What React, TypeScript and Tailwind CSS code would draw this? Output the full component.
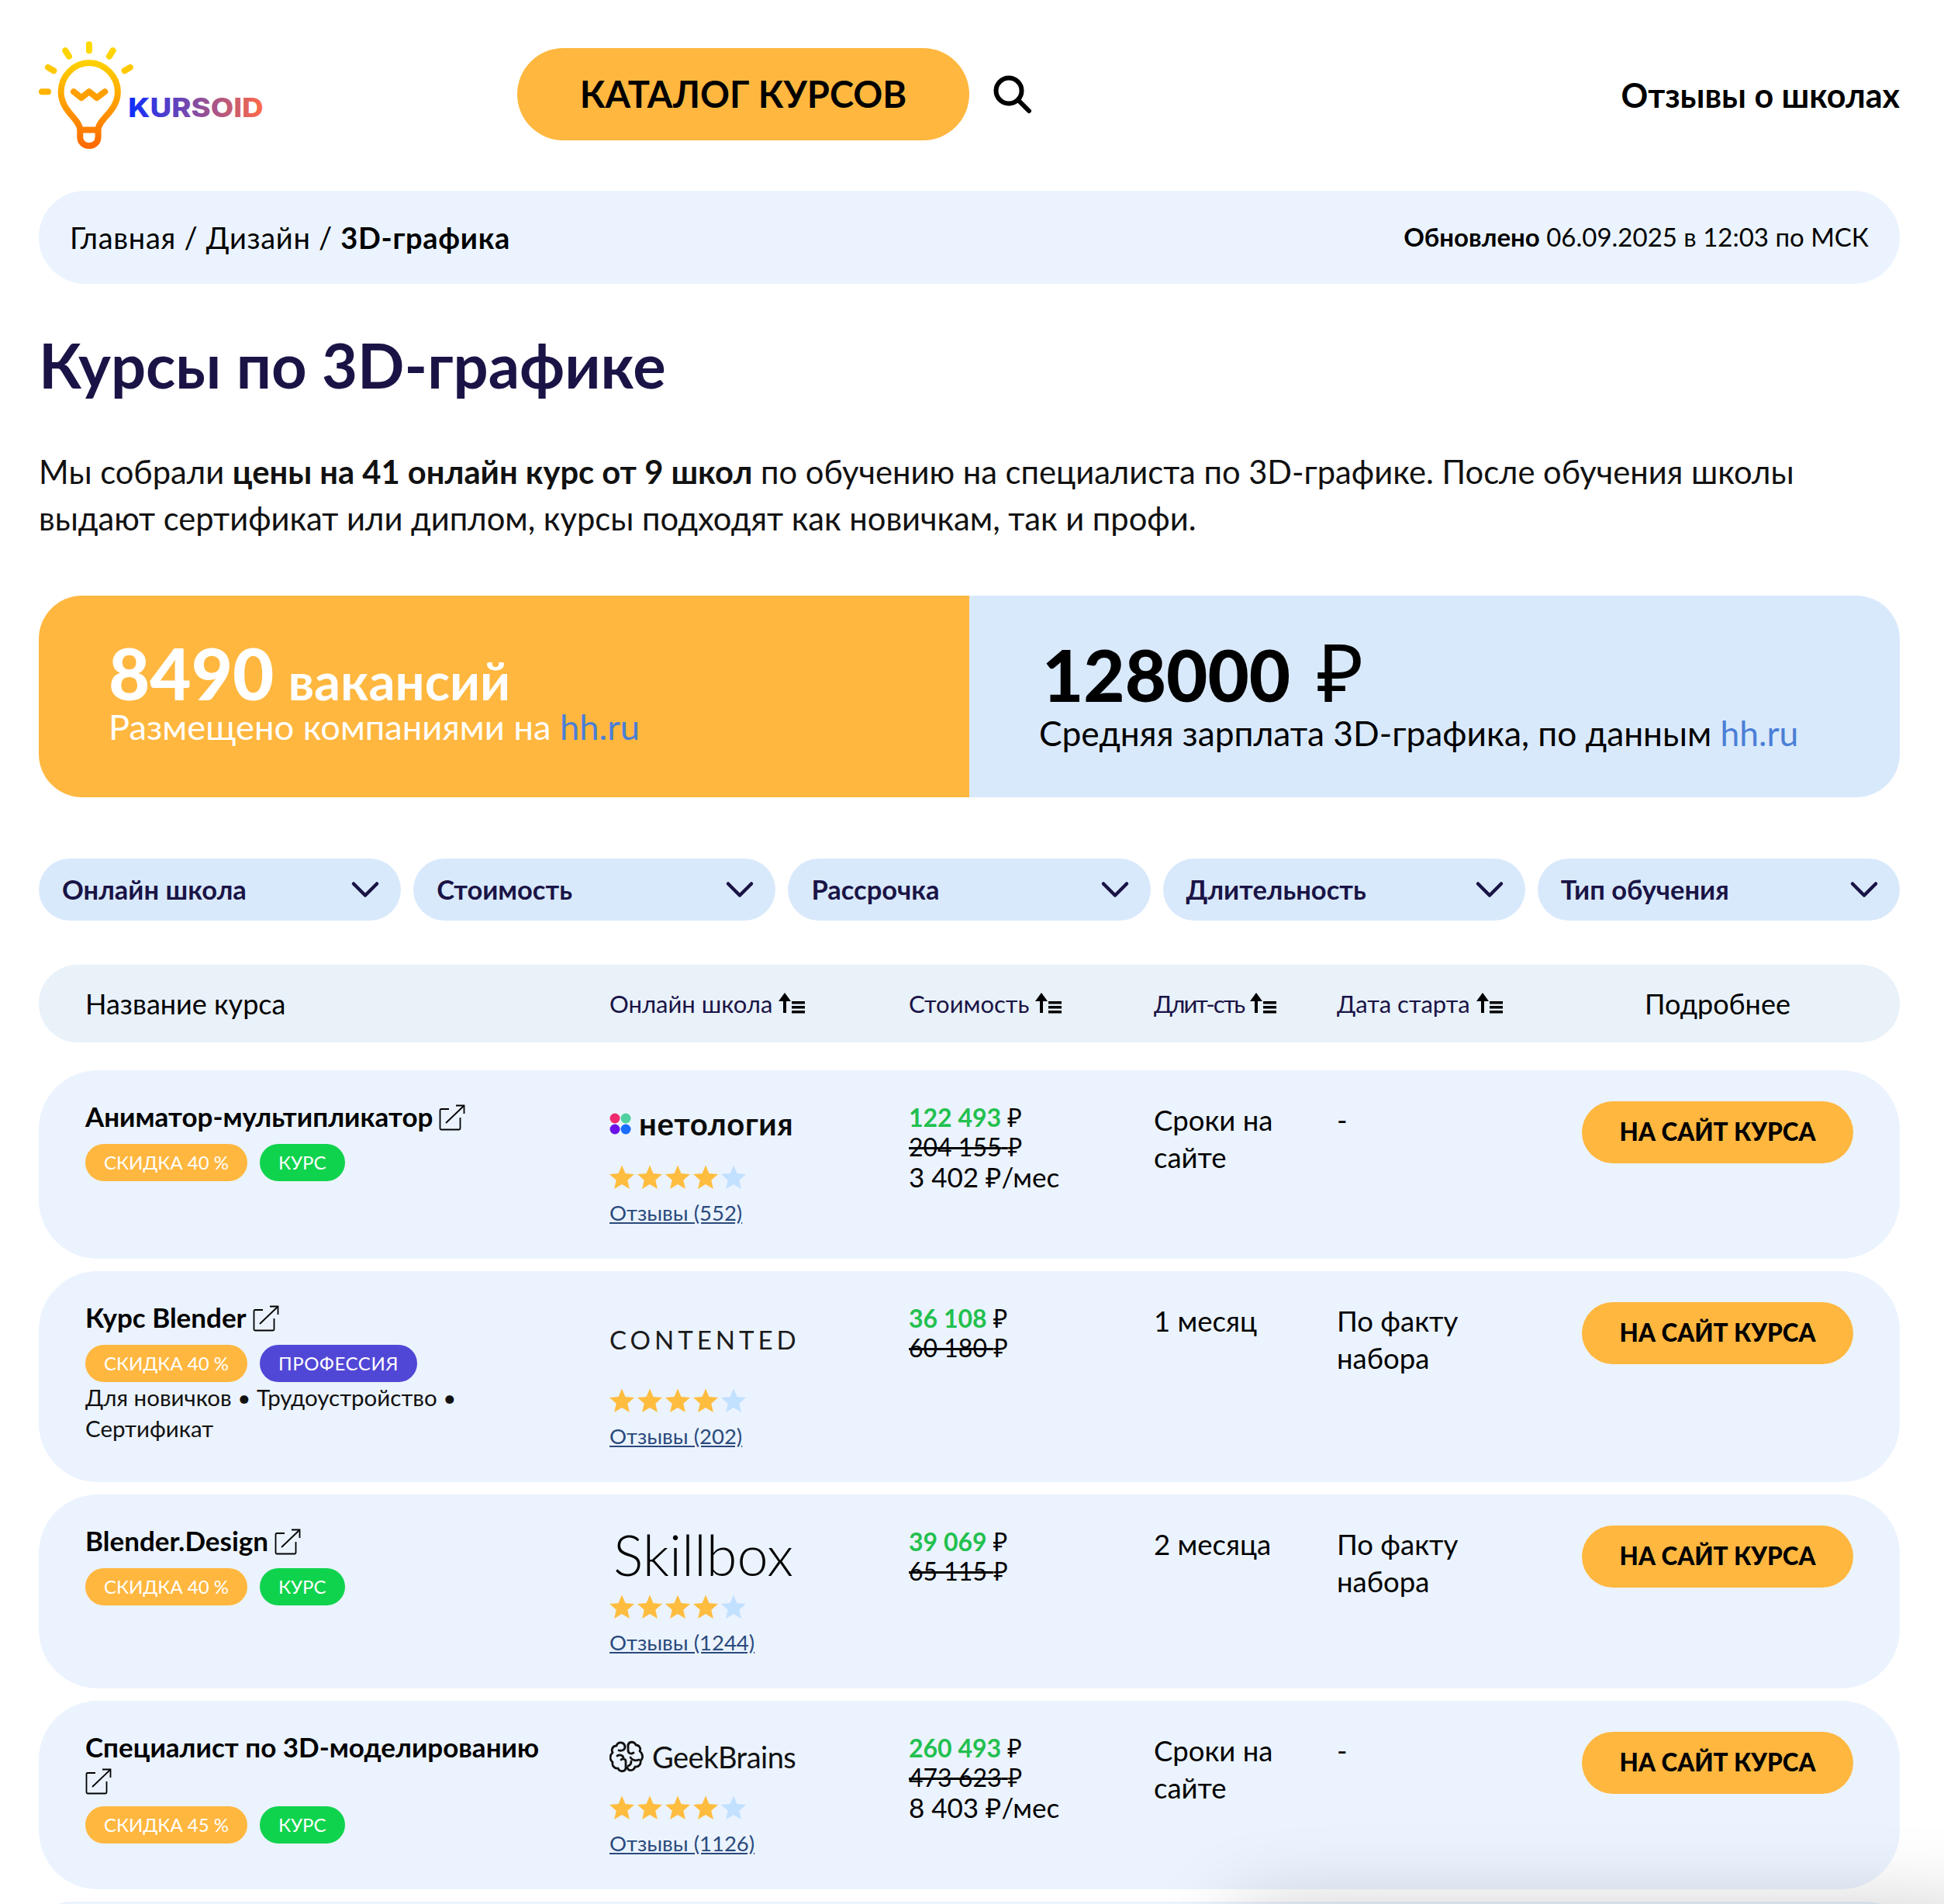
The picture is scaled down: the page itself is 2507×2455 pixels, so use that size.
import { ChevronDown } from "lucide-react";
import React from "react";

const font = "font-['Lato','Noto_Sans',sans-serif]";

function Logo() {
  return (
    <svg width={293} height={147} viewBox="60 60 880 440" className="shrink-0">
      <defs>
        <linearGradient id="bulb" x1="0" y1="0" x2="0" y2="1">
          <stop offset="0" stopColor="#ffd000" />
          <stop offset="1" stopColor="#ff6a00" />
        </linearGradient>
        <linearGradient id="word" x1="0" y1="0" x2="1" y2="0">
          <stop offset="0" stopColor="#0a2cff" />
          <stop offset="1" stopColor="#ff6b47" />
        </linearGradient>
      </defs>
      <g fill="none" stroke="url(#bulb)" strokeWidth={24} strokeLinecap="round" strokeLinejoin="round">
        <path d="M255 81V105" stroke="#ffd900" />
        <path d="M163 105L177 127" stroke="#ffd400" />
        <path d="M347 105L333 127" stroke="#ffd400" />
        <path d="M96 170L118 183" stroke="#ffc800" />
        <path d="M414 170L392 183" stroke="#ffc800" />
        <path d="M72 264H96" stroke="#ffb300" />
        <path d="M195 264L225 288L255 264L285 288L316 264" stroke="#ff9f00" />
        <path d="M220 412C220 370 146 340 146 265C146 205 195 152 255 152C315 152 366 205 366 265C366 340 290 370 290 412V440C290 460 275 474 255 474C235 474 220 460 220 440V412H290" />
      </g>
      <text x={406} y={362} fill="url(#word)" fontFamily="Inter" fontWeight={800} fontSize={102} textLength={524} lengthAdjust="spacingAndGlyphs">
        KURSOID
      </text>
    </svg>
  );
}

function Search() {
  return (
    <svg width={52} height={52} viewBox="0 0 52 52" fill="none" stroke="#000" strokeWidth={6} strokeLinecap="round" className="shrink-0">
      <circle cx={21} cy={21} r={16.5} />
      <path d="M33 33L47 47" />
    </svg>
  );
}

function SortIcon() {
  return (
    <svg width={34} height={28} viewBox="0 0 34 28" fill="#000" className="shrink-0">
      <path d="M8 0L16 11H10V26H6V11H0Z" />
      <rect x={17} y={11} width={17} height={3.500} />
      <rect x={17} y={17} width={17} height={3.500} />
      <rect x={17} y={23} width={17} height={3.500} />
    </svg>
  );
}

function ExternalIcon() {
  return (
    <svg width={34} height={34} viewBox="0 0 34 34" fill="none" stroke="#000" strokeWidth={1.8} className="mt-[3px] shrink-0">
      <path d="M13 6H3C2 6 1.500 6.500 1.500 7.500V31C1.500 32 2 32.500 3 32.500H26C27 32.500 27.500 32 27.500 31V17" />
      <path d="M9 24L32 2" />
      <path d="M22 1.500H32.500V12" />
    </svg>
  );
}

function Stars() {
  const star = "M16 0L20.500 10.600L32 11.600L23.300 19.200L25.900 30.500L16 24.500L6.100 30.500L8.700 19.200L0 11.600L11.500 10.600Z";
  return (
    <div className="flex h-[36px] items-center gap-[4px]">
      {[0, 1, 2, 3, 4].map((i) => (
        <svg key={i} width={32} height={32} viewBox="0 0 32 31">
          <path d={star} fill={i < 4 ? "#ffbd40" : "#c2e0ff"} strokeLinejoin="round" />
        </svg>
      ))}
    </div>
  );
}

function Badge({ color, wide, children }: { color: string; wide?: boolean; children: React.ReactNode }) {
  return (
    <span className={`flex h-[48px] items-center rounded-[24px] px-[24px] text-[24px] leading-none text-white ${wide ? "tracking-[0.6px]" : ""} ${color}`}>
      {children}
    </span>
  );
}

function Netology() {
  return (
    <div className="flex items-center gap-[10px]">
      <svg width={28} height={28} viewBox="0 0 28 28" className="shrink-0">
        <circle cx={7} cy={7} r={6.500} fill="#f0286d" />
        <circle cx={21} cy={7} r={6.500} fill="#4fd0a0" />
        <circle cx={7} cy={21} r={6.500} fill="#6a10e8" />
        <circle cx={21} cy={21} r={6.500} fill="#1a6cff" />
      </svg>
      <span className="text-[40px] font-bold leading-none tracking-[0.6px] text-[#0c0c0c]">нетология</span>
    </div>
  );
}

function GeekBrains() {
  return (
    <div className="flex items-center gap-[11px]">
      <svg width={44} height={42} viewBox="0 0 44 42" fill="none" stroke="#111" strokeWidth={2.800} strokeLinecap="round" strokeLinejoin="round" className="shrink-0">
        <path d="M20 8C19 2 11 1 9 7C4 7 2 12 4 16C0 19 0 25 4 28C3 33 7 37 11 36C13 41 20 41 21 36V27C21 24 17 23 15 25" />
        <path d="M24 6C25 1 32 1 34 6C38 6 41 10 39 14C43 17 44 23 40 26C41 31 37 35 33 34C31 40 24 40 23 35" />
        <path d="M20 8C20 12 17 14 12 13" />
        <path d="M24 6V13C24 17 28 18 31 16" />
        <path d="M10 20C13 18 17 19 18 22" />
        <path d="M27 22C30 26 33 27 38 25" />
        <path d="M28 27C28 30 27 32 24 33" />
      </svg>
      <span className="text-[38px] leading-none tracking-[-0.5px] text-[#111]">GeekBrains</span>
    </div>
  );
}

type Course = {
  name: string;
  nameBreak?: boolean;
  discount: string;
  kind: "КУРС" | "ПРОФЕССИЯ";
  tags?: string[];
  logo: React.ReactNode;
  logoBox: string;
  reviews: string;
  price: string;
  oldPrice: string;
  monthly?: string;
  duration: string;
  start: string;
};

const courses: Course[] = [
  {
    name: "Аниматор-мультипликатор",
    discount: "СКИДКА 40 %",
    kind: "КУРС",
    logo: <Netology />,
    logoBox: "h-[80px] pb-[22px]",
    reviews: "Отзывы (552)",
    price: "122 493",
    oldPrice: "204 155",
    monthly: "3 402 ₽/мес",
    duration: "Сроки на сайте",
    start: "-",
  },
  {
    name: "Курс Blender",
    discount: "СКИДКА 40 %",
    kind: "ПРОФЕССИЯ",
    tags: ["Для новичков • Трудоустройство •", "Сертификат"],
    logo: <span className="text-[33px] leading-none tracking-[5px] text-[#1b1b1b]">CONTENTED</span>,
    logoBox: "h-[109px] pb-[13px]",
    reviews: "Отзывы (202)",
    price: "36 108",
    oldPrice: "60 180",
    duration: "1 месяц",
    start: "По факту набора",
  },
  {
    name: "Blender.Design",
    discount: "СКИДКА 40 %",
    kind: "КУРС",
    logo: <span className="pl-[5px] text-[72px] font-light leading-none text-black">Skillbox</span>,
    logoBox: "h-[87px] pb-[14px]",
    reviews: "Отзывы (1244)",
    price: "39 069",
    oldPrice: "65 115",
    duration: "2 месяца",
    start: "По факту набора",
  },
  {
    name: "Специалист по 3D-моделированию",
    nameBreak: true,
    discount: "СКИДКА 45 %",
    kind: "КУРС",
    logo: <GeekBrains />,
    logoBox: "h-[80px] pb-[16px]",
    reviews: "Отзывы (1126)",
    price: "260 493",
    oldPrice: "473 623",
    monthly: "8 403 ₽/мес",
    duration: "Сроки на сайте",
    start: "-",
  },
];

const grid = "grid grid-cols-[676px_386px_316px_236px_316px_350px] px-[60px]";

function Row({ course }: { course: Course }) {
  return (
    <div className={`${grid} rounded-[76px] bg-[#ebf3fe] pt-[40px] pb-[39px]`}>
      <div className="-mt-[2px]">
        <div className={`flex flex-wrap items-center gap-x-[8px] text-[35px] font-bold leading-[42px] text-black ${course.nameBreak ? "gap-y-[4px]" : ""}`}>
          <span className={course.nameBreak ? "w-full" : ""}>{course.name}</span>
          <ExternalIcon />
        </div>
        <div className="mt-[15px] flex gap-[16px]">
          <Badge color="bg-[#ffb73f]">{course.discount}</Badge>
          <Badge color={course.kind === "КУРС" ? "bg-[#0fd34d]" : "bg-[#5147d6]"} wide={course.kind !== "КУРС"}>
            {course.kind}
          </Badge>
        </div>
        {course.tags && (
          <div className="text-[29.500px] leading-[40px] text-[#111]">
            {course.tags.map((t) => (
              <div key={t}>{t}</div>
            ))}
          </div>
        )}
      </div>
      <div>
        <div className={`flex items-center ${course.logoBox}`}>{course.logo}</div>
        <Stars />
        <div className="mt-[8px] text-[27.500px] leading-[40px] text-[#2a4a7c] underline">{course.reviews}</div>
      </div>
      <div className="pt-[2px] text-[32px] leading-[38px] text-black">
        <div>
          <span className="font-bold text-[#22c04e]">{course.price}</span> ₽
        </div>
        <div className="flex">
          <span className="line-through decoration-[3px]">{course.oldPrice}&nbsp;</span>₽
        </div>
        {course.monthly && <div className="text-[35px]">{course.monthly}</div>}
      </div>
      <div className="pr-[40px] text-[36.500px] leading-[48px] text-black">{course.duration}</div>
      <div className="pr-[140px] text-[36.500px] leading-[48px] text-black">{course.start}</div>
      <div className="h-[80px] w-[350px]">
        <button className="flex h-[80px] w-full items-center justify-center rounded-[40px] bg-[#ffb73f] text-[31.500px] font-black text-black">
          НА САЙТ КУРСА
        </button>
      </div>
    </div>
  );
}

function SortLabel({ tight, children }: { tight?: boolean; children: React.ReactNode }) {
  return (
    <div className="flex items-center gap-[8px] text-[31px] text-[#1a1446]">
      <span className={tight ? "tracking-[-2px]" : ""}>{children}</span>
      <SortIcon />
    </div>
  );
}

export default function App() {
  return (
    <div className={`relative h-[2455px] overflow-hidden bg-white pl-[50px] pr-[57px] pt-[50px] ${font}`}>
      <header className="flex h-[196px] items-start">
        <Logo />
        <button className="ml-[324px] mt-[12px] flex h-[119px] w-[583px] items-center justify-center rounded-[60px] bg-[#ffb73f] text-[47px] font-bold text-black">
          КАТАЛОГ КУРСОВ
        </button>
        <div className="ml-[30px] mt-[46px]">
          <Search />
        </div>
        <a className="ml-auto mt-[41px] text-[43px] font-bold text-black">Отзывы о школах</a>
      </header>

      <div className="flex h-[120px] items-center justify-between rounded-[60px] bg-[#ebf3fe] px-[40px] text-[38px] tracking-[0.7px] text-black">
        <div>
          Главная / Дизайн / <b>3D-графика</b>
        </div>
        <div className="text-[33px] tracking-normal">
          <b>Обновлено</b> 06.09.2025 в 12:03 по МСК
        </div>
      </div>

      <h1 className="mt-[60px] text-[79.500px] font-bold leading-[90px] text-[#1a1446]">Курсы по 3D-графике</h1>

      <p className="mt-[62px] text-[41.700px] leading-[60px] text-[#111]">
        Мы собрали <b>цены на 41 онлайн курс от 9 школ</b> по обучению на специалиста по 3D-графике. После обучения школы
        <br />
        выдают сертификат или диплом, курсы подходят как новичкам, так и профи.
      </p>

      <div className="mt-[70px] grid h-[260px] grid-cols-2 overflow-hidden rounded-[56px]">
        <div className="bg-[#ffb73f] pl-[90px] pt-[56px] text-white">
          <div className="flex items-baseline gap-[18px] font-black leading-[88px]">
            <span className="text-[92px]">8490</span>
            <span className="text-[67px] font-bold">вакансий</span>
          </div>
          <div className="-mt-[7px] text-[45.300px] leading-[46px]">
            Размещено компаниями на <span className="text-[#4a7fd6]">hh.ru</span>
          </div>
        </div>
        <div className="bg-[#d9e9fc] pl-[90px] pt-[53px] text-black">
          <div className="flex items-baseline gap-[34px] pl-[4px] font-black leading-[88px]">
            <span className="text-[92px]">128000</span>
            <span className="text-[104px] font-normal">₽</span>
          </div>
          <div className="mt-[8px] text-[44.300px] leading-[46px]">
            Средняя зарплата 3D-графика, по данным <span className="text-[#4a7fd6]">hh.ru</span>
          </div>
        </div>
      </div>

      <div className="mt-[79px] grid h-[80px] grid-cols-5 gap-[16px]">
        {["Онлайн школа", "Стоимость", "Рассрочка", "Длительность", "Тип обучения"].map((f) => (
          <div key={f} className="flex items-center justify-between rounded-[40px] bg-[#d9e9fc] pl-[30px] pr-[16px] text-[34.500px] font-bold text-[#1a1446]">
            {f}
            <ChevronDown size={60} strokeWidth={1.800} />
          </div>
        ))}
      </div>

      <div className={`${grid} mt-[57px] h-[100px] items-center rounded-[50px] bg-[#e9f1f9] text-[36px] text-black`}>
        <div>Название курса</div>
        <SortLabel>Онлайн школа</SortLabel>
        <SortLabel>Стоимость</SortLabel>
        <SortLabel tight>Длит-сть</SortLabel>
        <SortLabel>Дата старта</SortLabel>
        <div className="text-center">Подробнее</div>
      </div>

      <div className="mt-[36px] flex flex-col gap-[16px]">
        {courses.map((c) => (
          <Row key={c.name} course={c} />
        ))}
        <div className="h-[80px] rounded-[70px] bg-[#ebf3fe]" />
      </div>

      <div className="absolute bottom-[-110px] right-[-60px] h-[100px] w-[980px] rounded-[40px] shadow-[0_0_110px_rgba(0,0,0,0.22)]" />
    </div>
  );
}
